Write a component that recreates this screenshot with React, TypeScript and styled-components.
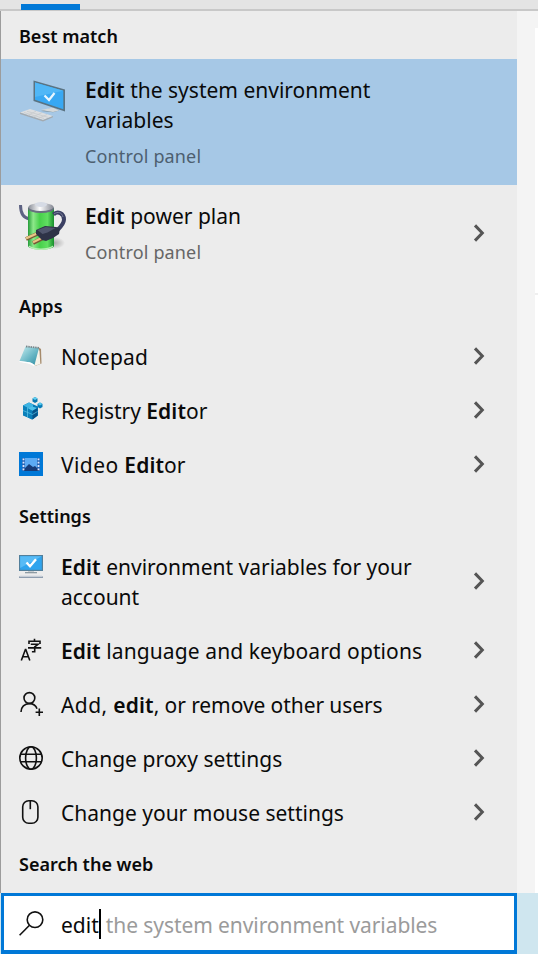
import React from 'react';
import styled, { createGlobalStyle } from 'styled-components';

const GlobalStyle = createGlobalStyle`
  * { box-sizing: border-box; }
  body {
    margin: 0;
    background: #f4f4f4;
    font-family: 'Noto Sans', 'Open Sans', sans-serif;
    color: #0a0a0a;
  }
`;

const Window = styled.div`
  width: 538px;
  height: 954px;
  display: flex;
  flex-direction: column;
  overflow: hidden;
`;

const TabStrip = styled.div`
  height: 11px;
  flex: none;
  padding: 4px 0 0 21px;
  background: #e4e4e4;
  border-bottom: 2px solid #c8c8c8;
`;

const ActiveTab = styled.div`
  position: relative;
  width: 59px;
  height: 6px;
  background: #0078d7;
`;

const Body = styled.div`
  flex: 1;
  display: grid;
  grid-template-columns: 517px 18px 3px;
  min-height: 0;
`;

const Results = styled.main`
  display: flex;
  flex-direction: column;
  background: #ececec;
  border-left: 1px solid #9c9c9c;
`;

const Gutter = styled.div`
  background: #f4f4f4;
`;

const PreviewEdge = styled.div`
  margin-top: 17px;
  background: #fff;
`;

const PreviewRule = styled.div`
  margin-top: 265px;
  height: 2px;
  background: #efefef;
`;

const Heading = styled.h2<{ $first?: boolean }>`
  margin: 0;
  height: 48px;
  flex: none;
  padding: ${(p) => (p.$first ? '1px 0 0 18px' : '0 0 1px 18px')};
  display: flex;
  align-items: center;
  font-size: 18px;
  font-weight: 600;
  line-height: 24px;
`;

const Match = styled.div<{ $selected?: boolean }>`
  height: ${(p) => (p.$selected ? 126 : 97)}px;
  flex: none;
  display: grid;
  grid-template-columns: 66px 1fr 60px;
  align-items: start;
  padding: 16px 0 0 18px;
  background: ${(p) => (p.$selected ? '#a6c8e6' : 'transparent')};
`;

const MatchText = styled.div`
  display: flex;
  flex-direction: column;
  font-size: 21px;
  line-height: 30px;
`;

const Source = styled.div<{ $tinted?: boolean }>`
  margin-top: 6px;
  font-size: 18px;
  line-height: 30px;
  letter-spacing: 0.15px;
  color: ${(p) => (p.$tinted ? '#4d5f70' : '#666')};
`;

const Row = styled.div<{ $tall?: boolean }>`
  height: ${(p) => (p.$tall ? 84 : 54)}px;
  flex: none;
  display: grid;
  grid-template-columns: 42px 1fr 60px;
  align-items: center;
  padding-left: 18px;
`;

const IconCell = styled.div<{ $top?: boolean }>`
  display: flex;
  align-self: ${(p) => (p.$top ? 'start' : 'center')};
  padding: ${(p) => (p.$top ? '15px 0 0' : '0 0 2px')};
  svg { display: block; overflow: visible; }
`;

const MatchIcon = styled.div`
  svg { display: block; overflow: visible; }
`;

const Label = styled.div<{ $track?: number }>`
  font-size: 21px;
  line-height: 30px;
  white-space: nowrap;
  letter-spacing: ${(p) => p.$track ?? 0}px;
`;

const Hit = styled.strong`
  font-weight: 600;
  letter-spacing: 0.1px;
`;

const Lead = styled.span`
  letter-spacing: 0.4px;
`;

const ArrowCell = styled.div<{ $match?: boolean }>`
  padding: ${(p) => (p.$match ? '22px 0 0 15px' : '0 0 2px 15px')};
  svg { display: block; }
`;

const SearchArea = styled.footer`
  height: 61px;
  flex: none;
  display: flex;
  background: #cfe6ef;
`;

const SearchBox = styled.div`
  width: 516px;
  margin-left: 1px;
  display: flex;
  align-items: center;
  padding: 0 0 0 15px;
  background: #fff;
  border: 3px solid #0078d7;
  border-bottom-width: 4px;
  font-size: 21px;
  line-height: 30px;
  white-space: nowrap;
`;

const SearchIcon = styled.div`
  width: 42px;
  svg { display: block; }
`;

const Caret = styled.span`
  width: 2px;
  height: 30px;
  margin-top: 1px;
  background: #000;
`;

const Typed = styled.span`
  padding-top: 3px;
`;

const Completion = styled.span`
  margin-left: 5px;
  padding-top: 3px;
  letter-spacing: -0.08px;
  color: #9b9b9b;
`;

const Chevron = () => (
  <svg width="16" height="20" viewBox="0 0 16 20" fill="none" stroke="#555" strokeWidth="3">
    <path d="M3 2.4 L10.3 10 L3 17.6" />
  </svg>
);

const SystemIcon = () => (
  <svg width="48" height="48" viewBox="0 0 48 48">
    <path d="M22 36l12-3.500 6 3-6 1.800z" fill="#7b919d" />
    <path d="M22 35l12-2.500 6 3-6 1.500z" fill="#d5d9db" />
    <path d="M14.500 5.500L46 14.500V36.500L14.500 26z" fill="#5a7382" />
    <path d="M16 7.500l28.300 8.300v18.500L16 24.700z" fill="#38a8f3" />
    <path d="M16 7.500l28.300 8.300L16 22z" fill="#50b7f7" />
    <path d="M25.500 20.500l4.500 4.500 5.500-7" fill="none" stroke="#e8f6ff" strokeWidth="2.200" />
    <path d="M1 37.500l10-3.500 23 7-10 4z" fill="#dcdee0" />
    <path d="M1 37.500L24 45l10-4v1.300L24 46.500 1 39z" fill="#a3aab0" />
    <path d="M5 37.500l20 6M8 36.300l21 6M9 40.200l8-4M14 42l9-4.500M19 43.500l9-4" stroke="#c6cacd" strokeWidth=".8" fill="none" />
  </svg>
);

const PowerIcon = () => (
  <svg width="48" height="50" viewBox="0 0 48 50">
    <defs>
      <linearGradient id="cell">
        <stop offset="0" stopColor="#249c38" />
        <stop offset=".2" stopColor="#8ee88b" />
        <stop offset=".45" stopColor="#47d04b" />
        <stop offset=".75" stopColor="#61df61" />
        <stop offset="1" stopColor="#178d2c" />
      </linearGradient>
      <linearGradient id="cap">
        <stop offset="0" stopColor="#8a8f99" />
        <stop offset=".45" stopColor="#fff" />
        <stop offset="1" stopColor="#858994" />
      </linearGradient>
      <radialGradient id="shade">
        <stop offset="0" stopColor="#a9a9a9" />
        <stop offset="1" stopColor="#ececec" />
      </radialGradient>
    </defs>
    <ellipse cx="35" cy="42" rx="11" ry="6" fill="url(#shade)" />
    <path d="M1.500 4c0 8 3 13 9 14" fill="none" stroke="#5d6283" strokeWidth="3" />
    <path d="M9 7v38c2 5 24 5 26 0V7z" fill="url(#cell)" />
    <path d="M10 44.500c5 4 19 4 24 0v1.500c-5 4-19 4-24 0z" fill="#b8eeb5" />
    <ellipse cx="22" cy="7.500" rx="13" ry="4.500" fill="#697080" />
    <ellipse cx="22" cy="6" rx="12.500" ry="4" fill="url(#cap)" />
    <ellipse cx="22" cy="3.500" rx="6" ry="2.500" fill="#d6dbe5" />
    <path d="M34.500 13.500c4-4 10.500-1.500 10.500 5 0 4-3 7-6 10" fill="none" stroke="#3b4063" strokeWidth="4" />
    <path d="M35 13c4-3 8-1.500 9 3" fill="none" stroke="#7d829c" strokeWidth="1" />
    <path d="M7 38l12-5.500M14 42l11-5.500" stroke="#785735" strokeWidth="4" />
    <path d="M7 37.300l12-5.300M14 41.300l10-5" stroke="#e8c486" strokeWidth="2.400" />
    <path d="M17 29l9-4 11 1 4 1-1 6-6 4-7 3-4-1-6-6z" fill="#2e3347" />
    <path d="M18.500 29l8-3 10 1-8 4.500-5 1.500z" fill="#50566d" />
  </svg>
);

const NotepadIcon = () => (
  <svg width="24" height="24" viewBox="0 0 24 24">
    <defs>
      <linearGradient id="pad" x1="0" y1="0" x2="1" y2="1">
        <stop offset="0" stopColor="#c6edf0" />
        <stop offset=".6" stopColor="#63b3c2" />
        <stop offset="1" stopColor="#318da3" />
      </linearGradient>
    </defs>
    <path d="M19 3l3 2 .5 14.500L16 22z" fill="#a58a6b" />
    <path d="M19 4l1.500 3 .8 13-5.800 2-1-1z" fill="#f5f3e9" />
    <path d="M6.500 2.500L20 4 15.500 21C11 17 6 18 .5 17z" fill="url(#pad)" />
    <path d="M.5 17C6 18 11 17 15.500 21l-1 1C10 19 6 19 .5 18z" fill="#fff" />
    <path d="M7 2.500l13 1.300" stroke="#79868a" strokeWidth="1.800" strokeDasharray="1.5 .8" />
  </svg>
);

const RegistryIcon = () => (
  <svg width="24" height="24" viewBox="0 0 24 24">
    <g transform="translate(0 -1.500)">
      <path d="M4 9l6-3 9 4v9l-5.500 4L4 19z" fill="#087cb7" />
      <path d="M4 9l6-3 4 2v3l-5 1z" fill="#3fb4e2" />
      <path d="M9 12l4-2 5 1.500-5 3z" fill="#50c2ea" />
      <path d="M13.500 14.500l5-3V19l-5 4z" fill="#075389" />
      <path d="M4 9l4.300 2v9.500L4 18.500zM9 12l4 2v9l-4-2z" fill="#0b80ba" />
      <path d="M4 14l9.500 4 5-3M8.500 11v10" fill="none" stroke="#5ec5e6" strokeWidth=".7" />
      <path d="M13.500 2L16 .5 18.500 2v3L16 6.500 13.500 5z" fill="#0b79b0" />
      <path d="M13.500 2L16 .5 18.500 2 16 3.500z" fill="#61cff0" />
      <path d="M18.500 7.500L21 6l2.500 1.500v3L21 12l-2.500-1.500z" fill="#087cb7" />
      <path d="M18.500 7.500L21 6l2.500 1.500L21 9z" fill="#51c9ef" />
    </g>
  </svg>
);

const VideoIcon = () => (
  <svg width="24" height="24" viewBox="0 0 24 24">
    <path fill="#0078d7" d="M0 0h24v24H0z" />
    <path fill="#2467b8" d="M3 6h18v13H3z" />
    <path fill="#5cabf4" d="M6 6h12v13H6z" />
    <path d="M5 17l5-5 4 3 2-1 4 4v1H5z" fill="#173c78" />
    <path d="M4.500 6.500v12M19.500 6.500v12" stroke="#dce7ff" strokeWidth="1.800" strokeDasharray="1.8 1.5" />
  </svg>
);

const MonitorIcon = () => (
  <svg width="24" height="24" viewBox="0 0 24 24">
    <path fill="#527f9b" d="M0 0h24v16H0z" />
    <path fill="#2fa4ee" d="M1.2 1.2h21.6v13.600H1.2z" />
    <path fill="#57bbf6" d="M1.2 1.2h21.6L1.2 13z" />
    <path d="M7.500 7.500l3.500 3.700 6-7" fill="none" stroke="#fff" strokeWidth="2.400" />
    <path fill="#c5cbce" d="M9 16h6v1H9z" />
    <path fill="#8e9ba3" d="M6 17h12v1.3H6z" />
    <path fill="#8495a9" d="M0 21.500h24v1.400H0z" />
    <path fill="#d4dbe2" d="M1 20.500h22v1H1z" />
  </svg>
);

const LanguageIcon = () => (
  <svg width="24" height="24" viewBox="0 0 24 24" fill="none" stroke="#111" strokeWidth="1.6">
    <path d="M2.300 22.500L6.400 11.500h.4l4 11M3.700 18.800h5.900" />
    <path d="M15.500 .8v2.400M10 6V3.200h11V6M11.800 6.300h7.200l-3.300 2.500v5h-2.800M9 9.900h13.200" />
  </svg>
);

const UserIcon = () => (
  <svg width="24" height="24" viewBox="0 0 24 24" fill="none" stroke="#111" strokeWidth="1.6">
    <circle cx="10.400" cy="6" r="5.400" />
    <path d="M2 20c0-5 3.600-8.400 8.400-8.400 3.700 0 6.600 2.100 7.600 5.200M20.300 16.500v7.500M16.600 20.300h7.400" />
  </svg>
);

const GlobeIcon = () => (
  <svg width="24" height="24" viewBox="0 0 24 24" fill="none" stroke="#111" strokeWidth="1.600">
    <circle cx="12" cy="12" r="11.200" />
    <ellipse cx="12" cy="12" rx="5.400" ry="11.200" />
    <path d="M1.500 8.300h21M1.500 15.700h21" />
  </svg>
);

const MouseIcon = () => (
  <svg width="24" height="24" viewBox="0 0 24 24" fill="none" stroke="#111" strokeWidth="1.600">
    <rect x="3.700" y=".8" width="15.200" height="22.400" rx="6" />
    <path d="M11.300 1v8.200" />
  </svg>
);

const MagnifierIcon = () => (
  <svg width="25" height="25" viewBox="0 0 25 25" fill="none" stroke="#111" strokeWidth="1.600">
    <circle cx="16" cy="8.700" r="7.800" />
    <path d="M10.500 14.300L.6 24.200" />
  </svg>
);

interface ResultProps {
  icon: React.ReactNode;
  children: React.ReactNode;
  tall?: boolean;
  track?: number;
}

const Result = ({ icon, children, tall, track }: ResultProps) => (
  <Row $tall={tall}>
    <IconCell $top={tall}>{icon}</IconCell>
    <Label $track={track}>{children}</Label>
    <ArrowCell><Chevron /></ArrowCell>
  </Row>
);

export default function App() {
  return (
    <Window>
      <GlobalStyle />
      <TabStrip><ActiveTab /></TabStrip>
      <Body>
        <Results>
          <Heading $first>Best match</Heading>
          <Match $selected>
            <MatchIcon><SystemIcon /></MatchIcon>
            <MatchText>
              <div><Hit>Edit</Hit> the system environment<br />variables</div>
              <Source $tinted>Control panel</Source>
            </MatchText>
          </Match>
          <Match>
            <MatchIcon><PowerIcon /></MatchIcon>
            <MatchText>
              <div><Hit>Edit</Hit> power plan</div>
              <Source>Control panel</Source>
            </MatchText>
            <ArrowCell $match><Chevron /></ArrowCell>
          </Match>
          <Heading>Apps</Heading>
          <Result icon={<NotepadIcon />} track={0.2}>Notepad</Result>
          <Result icon={<RegistryIcon />} track={-0.05}>Registry <Hit>Edit</Hit>or</Result>
          <Result icon={<VideoIcon />}><Lead>Video </Lead><Hit>Edit</Hit>or</Result>
          <Heading>Settings</Heading>
          <Result icon={<MonitorIcon />} tall>
            <Hit>Edit</Hit> environment variables for your<br />account
          </Result>
          <Result icon={<LanguageIcon />} track={0.1}><Hit>Edit</Hit> language and keyboard options</Result>
          <Result icon={<UserIcon />} track={-0.08}><Lead>Add, </Lead><Hit>edit</Hit>, or remove other users</Result>
          <Result icon={<GlobeIcon />} track={0.04}>Change proxy settings</Result>
          <Result icon={<MouseIcon />}>Change your mouse settings</Result>
          <Heading>Search the web</Heading>
        </Results>
        <Gutter />
        <PreviewEdge><PreviewRule /></PreviewEdge>
      </Body>
      <SearchArea>
        <SearchBox>
          <SearchIcon><MagnifierIcon /></SearchIcon>
          <Typed>edit</Typed>
          <Caret />
          <Completion>the system environment variables</Completion>
        </SearchBox>
      </SearchArea>
    </Window>
  );
}
